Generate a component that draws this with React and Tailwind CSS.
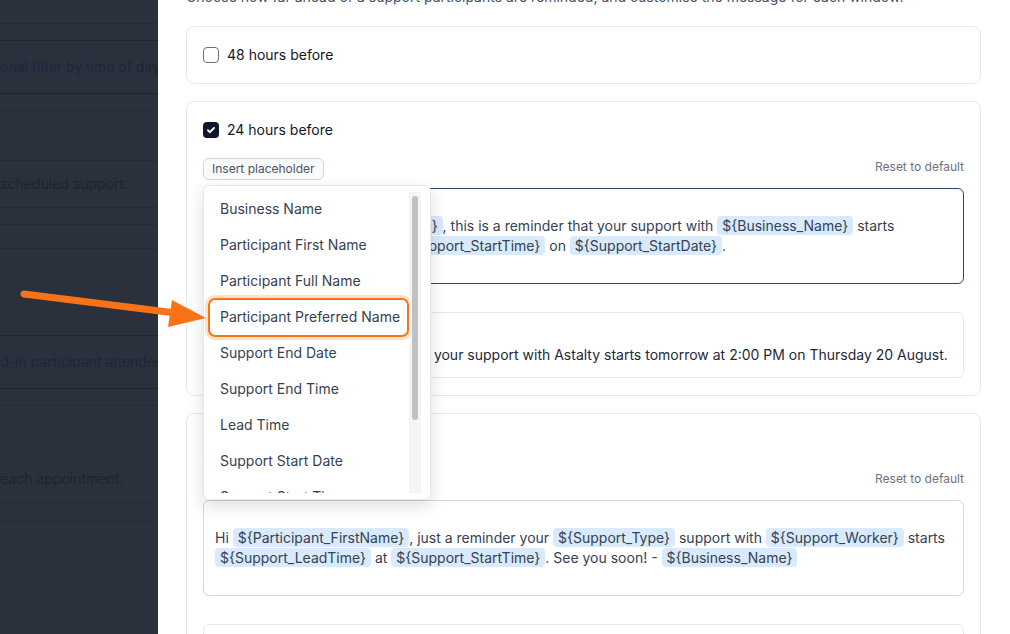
import React from 'react';

const PLACEHOLDERS = [
  'Business Name',
  'Participant First Name',
  'Participant Full Name',
  'Participant Preferred Name',
  'Support End Date',
  'Support End Time',
  'Lead Time',
  'Support Start Date',
  'Support Start Time',
  'Support Type',
  'Support Worker',
];

const MSG_24 = ['Hi ', '${Participant_PreferredName}', ', this is a reminder that your support with ', '${Business_Name}', ' starts ', '${Support_LeadTime}', ' at ', '${Support_StartTime}', ' on ', '${Support_StartDate}', '.'];
const MSG_2 = ['Hi ', '${Participant_FirstName}', ', just a reminder your ', '${Support_Type}', ' support with ', '${Support_Worker}', ' starts ', '${Support_LeadTime}', ' at ', '${Support_StartTime}', '. See you soon! - ', '${Business_Name}'];

function Message({ parts }) {
  return (
    <>
      {parts.map((p, i) =>
        p.startsWith('${') ? (
          <span key={i} className="rounded-[4px] bg-[#d8eafc] px-[5px] py-px">{p}</span>
        ) : (
          <span key={i}>{p}</span>
        )
      )}
    </>
  );
}

function Checkbox({ checked }) {
  if (checked) {
    return (
      <span className="flex h-4 w-4 shrink-0 items-center justify-center rounded-[4px] bg-[#0f172a]">
        <svg viewBox="0 0 16 16" className="h-3 w-3" fill="none" stroke="white" strokeWidth="2.6" strokeLinecap="round" strokeLinejoin="round">
          <path d="M4 8.4l2.6 2.5L12 5.4" />
        </svg>
      </span>
    );
  }
  return <span className="h-4 w-4 shrink-0 rounded-[4px] border border-gray-500 bg-white" />;
}

function Dropdown() {
  return (
    <div className="absolute left-0 top-[27px] z-20 flex h-[315px] w-[228px] rounded-md border border-gray-200 bg-white pb-[6px] pt-[5px] shadow-[0_6px_16px_rgba(15,23,42,0.14)]">
      <div className="min-w-0 flex-1 overflow-hidden">
        {PLACEHOLDERS.map((p) => (
          <div key={p} className="relative flex h-9 items-center pl-4 text-sm text-gray-700">
            {p === 'Participant Preferred Name' && (
              <span className="absolute -bottom-[2px] left-[4px] -top-[1px] right-[0px] rounded-[7px] border-2 border-[#f97316] shadow-[0_0_0_3px_rgba(251,146,60,0.28)]" />
            )}
            <span className="relative">{p}</span>
          </div>
        ))}
      </div>
      <div className="mr-[9px] mt-[1px] w-[12px] border-x border-gray-100 bg-[#f5f5f5] px-[2px] pt-[4px]">
        <div className="h-[224px] rounded-full bg-[#c1c1c1]" />
      </div>
    </div>
  );
}

function Window({ label, checked, message, preview, focused, dropdown }) {
  return (
    <div className={`rounded-lg border border-gray-200 bg-white px-4 pt-[18px] ${checked ? 'pb-[17px]' : 'pb-[18px]'}`}>
      <label className="flex h-5 items-center gap-2 text-sm text-gray-900">
        <Checkbox checked={checked} />
        {label}
      </label>
      {checked && (
        <>
          <div className="relative mt-[18px] flex items-start justify-between">
            <button className="h-[22px] rounded-md border border-gray-300 bg-gray-50 px-2 text-xs text-gray-600">Insert placeholder</button>
            <span className="pt-px text-xs text-gray-500">Reset to default</span>
            {dropdown && <Dropdown />}
          </div>
          <div className={`mt-2 rounded-md border px-[11px] py-[27px] text-sm leading-5 text-gray-700 ${focused ? 'border-[#1d4874]' : 'border-gray-300'}`}>
            <Message parts={message} />
          </div>
          <div className="mt-[28px] rounded-md border border-slate-200 px-3 py-3">
            <p className="text-xs leading-4 text-gray-500">Preview</p>
            <p className="mt-1 whitespace-nowrap text-sm leading-5 text-gray-800">{preview}</p>
          </div>
        </>
      )}
    </div>
  );
}

function Backdrop() {
  const faint = 'border-b border-[#252b36]';
  return (
    <div className="w-[158px] shrink-0 overflow-hidden bg-[#2a303c] text-sm">
      <div className={`h-[24px] ${faint}`} />
      <div className="h-[16px]" />
      <div className="flex h-[54px] items-center whitespace-nowrap border-y border-[#20262f] text-[#1a283d]">onal filter by time of day</div>
      <div className={`h-[17px] ${faint}`} />
      <div className={`h-[50px] ${faint}`} />
      <div className={`flex h-[47px] items-center whitespace-nowrap text-[#1f242e] ${faint}`}>scheduled support.</div>
      <div className={`h-[17px] ${faint}`} />
      <div className={`h-[24px] ${faint}`} />
      <div className="h-[86px]" />
      <div className="flex h-[54px] items-center whitespace-nowrap border-y border-[#20262f] text-[#1a283d]">d-in participant attended</div>
      <div className={`h-[17px] ${faint}`} />
      <div className={`flex h-[97px] items-end whitespace-nowrap pb-[13px] text-[#1f242e] ${faint}`}>each appointment.</div>
      <div className={`h-[19px] ${faint}`} />
    </div>
  );
}

export default function App() {
  return (
    <div className="relative flex h-[634px] w-[1010px] overflow-hidden bg-white font-['Inter',sans-serif]">
      <Backdrop />
      <div className="min-w-0 flex-1 bg-white pl-7 pr-[29px]">
        <p className="-mt-[13px] mb-[19px] whitespace-nowrap text-sm leading-5 text-gray-600">
          Choose how far ahead of a support participants are reminded, and customise the message for each window.
        </p>
        <div className="flex flex-col gap-[17px]">
          <Window label="48 hours before" checked={false} />
          <Window
            label="24 hours before"
            checked
            focused
            dropdown
            message={MSG_24}
            preview="Hi Sophie, this is a reminder that your support with Astalty starts tomorrow at 2:00 PM on Thursday 20 August."
          />
          <Window
            label="2 hours before"
            checked
            message={MSG_2}
            preview="Hi Sophie, just a reminder your support with Jordan starts in 2 hours at 2:00 PM."
          />
        </div>
      </div>
      <svg className="pointer-events-none absolute left-0 top-0 z-30" width="1010" height="634">
        <line x1="24" y1="294" x2="176" y2="313" stroke="#f97316" strokeWidth="7" strokeLinecap="round" />
        <polygon points="172,300 206,318 168,327" fill="#f97316" />
      </svg>
    </div>
  );
}
